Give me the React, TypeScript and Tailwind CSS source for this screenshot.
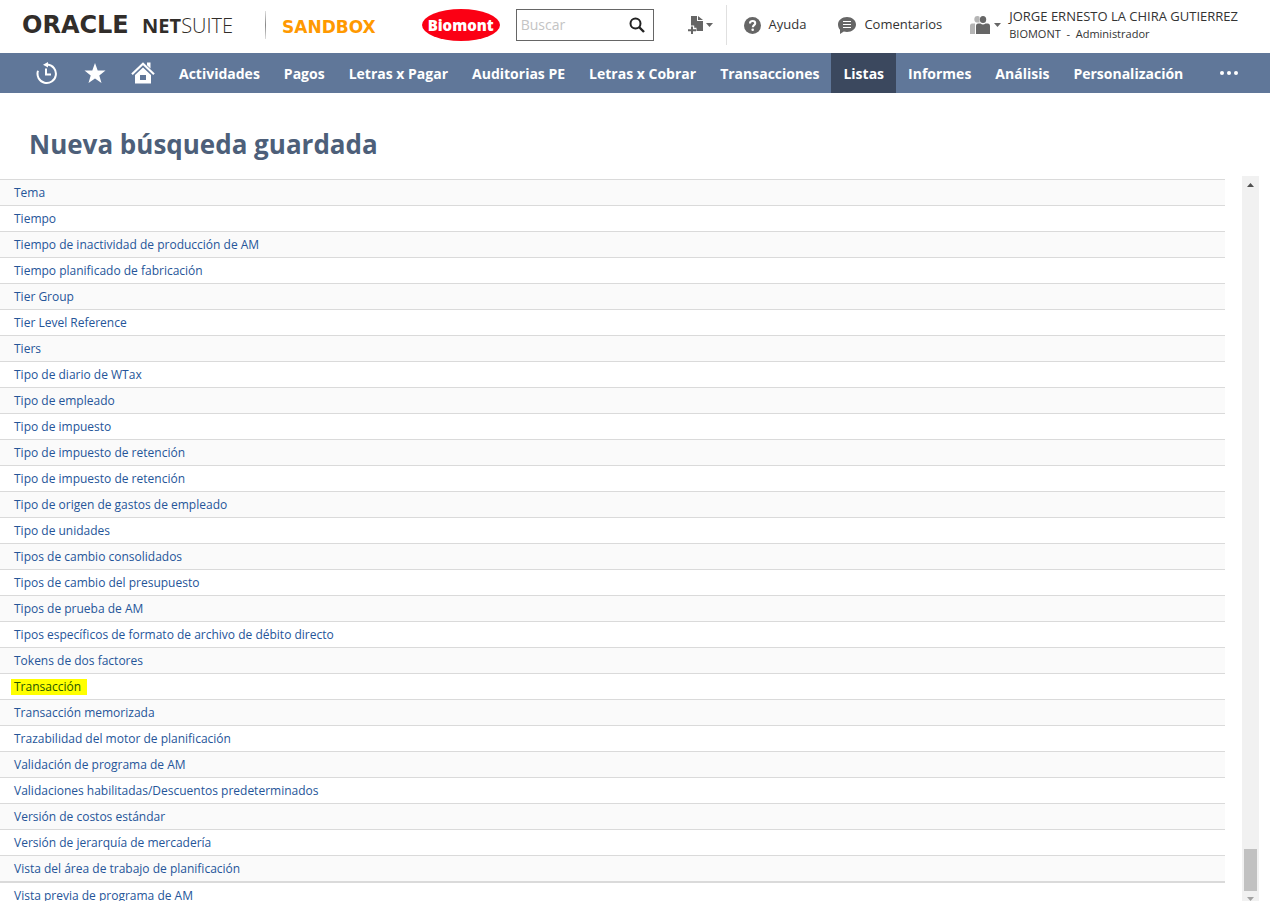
import React from "react";

const menuItems = [
  "Actividades",
  "Pagos",
  "Letras x Pagar",
  "Auditorias PE",
  "Letras x Cobrar",
  "Transacciones",
  "Listas",
  "Informes",
  "Análisis",
  "Personalización",
];

const searchTypes = [
  "Tema",
  "Tiempo",
  "Tiempo de inactividad de producción de AM",
  "Tiempo planificado de fabricación",
  "Tier Group",
  "Tier Level Reference",
  "Tiers",
  "Tipo de diario de WTax",
  "Tipo de empleado",
  "Tipo de impuesto",
  "Tipo de impuesto de retención",
  "Tipo de impuesto de retención",
  "Tipo de origen de gastos de empleado",
  "Tipo de unidades",
  "Tipos de cambio consolidados",
  "Tipos de cambio del presupuesto",
  "Tipos de prueba de AM",
  "Tipos específicos de formato de archivo de débito directo",
  "Tokens de dos factores",
  "Transacción",
  "Transacción memorizada",
  "Trazabilidad del motor de planificación",
  "Validación de programa de AM",
  "Validaciones habilitadas/Descuentos predeterminados",
  "Versión de costos estándar",
  "Versión de jerarquía de mercadería",
  "Vista del área de trabajo de planificación",
  "Vista previa de programa de AM",
];

function Caret() {
  return (
    <svg width="7" height="4" viewBox="0 0 7 4" fill="#666" aria-hidden="true">
      <path d="M0 0h7L3.5 4z" />
    </svg>
  );
}

function HistoryIcon() {
  return (
    <svg width="22" height="22" viewBox="0 0 22 22" fill="none" stroke="#fff" aria-hidden="true">
      <path d="M2 8.800a9.200 9.200 0 1 0 9.500-6.200" strokeWidth="2" />
      <path d="M7 2.800 12 0v5.600z" fill="#fff" stroke="none" />
      <path d="M10 6.500v6H15" strokeWidth="2" />
    </svg>
  );
}

function StarIcon() {
  return (
    <svg width="22" height="20" viewBox="0 0 22 20" fill="#fff" aria-hidden="true">
      <path d="M11 0l2.700 7.400 7.800.2-6.200 4.800 2.200 7.500L11 15.500l-6.500 4.400 2.200-7.500L.500 7.600l7.800-.2z" />
    </svg>
  );
}

function HomeIcon() {
  return (
    <svg width="24" height="22" viewBox="0 0 24 22" aria-hidden="true">
      <path d="M1 12.200 12 1.800l11 10.400" fill="none" stroke="#fff" strokeWidth="2.200" />
      <path d="M16 .5h3.500v6L16 3.300z" fill="#fff" />
      <path fillRule="evenodd" d="M12 5.500l8 7.500v8.500H4V13zM9 13v5h6v-5z" fill="#fff" />
    </svg>
  );
}

function NewRecordIcon() {
  return (
    <svg width="16" height="18" viewBox="0 0 16 18" fill="#666" aria-hidden="true">
      <path d="M3 0h6v5h6v10H8.500v-3.200H6.200V9.500H3z" />
      <path d="M10 0l5 4h-5z" />
      <path d="M3 10.500h2v2.700h3v2H5V18H3v-2.800H0v-2h3z" />
    </svg>
  );
}

function HelpIcon() {
  return (
    <svg width="17" height="17" viewBox="0 0 17 17" aria-hidden="true">
      <circle cx="8.500" cy="8.500" r="8.500" fill="#666" />
      <path d="M6 6.400C6 4.800 7.100 4 8.600 4s2.600.8 2.600 2.200c0 1.900-2.400 1.900-2.400 4" fill="none" stroke="#fff" strokeWidth="2.100" />
      <circle cx="8.700" cy="12.800" r="1.300" fill="#fff" />
    </svg>
  );
}

function CommentIcon() {
  return (
    <svg width="18" height="17" viewBox="0 0 18 17" aria-hidden="true">
      <path d="M9 0c5 0 9 3.200 9 7.500S14 15 9 15c-1.200 0-2.300-.1-3.200-.4L2 17v-4.200C.8 11.400 0 9.600 0 7.500 0 3.200 4 0 9 0z" fill="#666" />
      <path d="M5 4.500h8M5 7.500h8M5 10.500h8" stroke="#fff" strokeWidth="1.200" />
    </svg>
  );
}

function PeopleIcon() {
  return (
    <svg width="20" height="18" viewBox="0 0 20 18" aria-hidden="true">
      <path d="M7.500 0a3.300 3.300 0 0 0-3.200 3.300c0 1.600 1 3 2.300 3.300h3V.8A3 3 0 0 0 7.500 0z" fill="#b5b5b5" />
      <path d="M0 18v-8c0-1.500.8-2.300 2-2.500h3V18z" fill="#b5b5b5" />
      <ellipse cx="13" cy="3.500" rx="3.200" ry="3.500" fill="#666" />
      <path d="M6 18v-8c0-1.600.8-2.400 2.200-2.500h2.300c1.500 1.200 3.500 1.200 5 0h2.300c1.400.1 2.200.9 2.200 2.500v8z" fill="#666" />
    </svg>
  );
}

function SearchIcon() {
  return (
    <svg width="16" height="16" viewBox="0 0 16 16" fill="none" stroke="#222" aria-hidden="true">
      <circle cx="6.500" cy="6.500" r="5" strokeWidth="2" />
      <path d="M10 10l5 5" strokeWidth="2.400" />
    </svg>
  );
}

function Header() {
  return (
    <header className="flex h-[53px] shrink-0 items-center bg-white pb-[3px] pl-[22px] pr-8 whitespace-nowrap text-[#333]">
      <a href="#inicio" className="flex w-[243px] items-baseline justify-between pr-8 text-[#312d2a]">
        <span className="font-['DejaVu_Sans',sans-serif] text-2xl leading-6 font-bold">
          ORACLE
        </span>
        <span className="text-xl leading-6">
          <b>NET</b>
          <span className="font-light">SUITE</span>
        </span>
      </a>
      <div className="h-7 w-px bg-gradient-to-b from-[#ddd] via-[#888] to-[#ddd]" />
      <div className="ml-4 pt-1 font-['DejaVu_Sans',sans-serif] text-[17px] leading-5 font-bold text-[#ff9900]">
        SANDBOX
      </div>
      <div className="ml-[46px] flex h-8 w-[78px] items-center justify-center rounded-[50%] bg-[#fb0014] text-[15px] font-extrabold text-white">
        Biomont
      </div>
      <form className="ml-4 flex h-8 w-[138px] items-center border border-[#666] pr-2" role="search">
        <input
          type="text"
          aria-label="Buscar"
          placeholder="Buscar"
          className="min-w-0 flex-1 px-1 text-sm placeholder:text-[#c4c4c4] focus:outline-none"
        />
        <button type="button" aria-label="Iniciar búsqueda">
          <SearchIcon />
        </button>
      </form>
      <div className="ml-auto flex items-center">
        <button type="button" aria-label="Crear nuevo" className="flex items-center gap-[2px]">
          <NewRecordIcon />
          <Caret />
        </button>
        <div className="ml-[13px] h-10 w-px bg-[#e0e0e0]" />
        <a href="#ayuda" className="ml-[17px] flex items-center gap-2 text-[13px]">
          <HelpIcon />
          Ayuda
        </a>
        <a href="#comentarios" className="ml-8 flex items-center gap-2 text-[13px]">
          <CommentIcon />
          Comentarios
        </a>
        <button type="button" className="ml-7 flex items-center text-left">
          <PeopleIcon />
          <span className="ml-1 mr-2">
            <Caret />
          </span>
          <span>
            <span className="block text-[13px] leading-[18px]">JORGE ERNESTO LA CHIRA GUTIERREZ</span>
            <span className="block text-[11px] leading-[18px]">BIOMONT&nbsp; -&nbsp; Administrador</span>
          </span>
        </button>
      </div>
    </header>
  );
}

function NavBar() {
  return (
    <nav className="flex h-10 shrink-0 items-stretch bg-[#607799] pr-8 pl-[23px] text-sm font-bold whitespace-nowrap text-white">
      <a href="#recientes" aria-label="Registros recientes" className="flex w-12 items-center justify-center">
        <HistoryIcon />
      </a>
      <a href="#accesos" aria-label="Accesos directos" className="flex w-12 items-center justify-center">
        <StarIcon />
      </a>
      <a href="#inicio" aria-label="Inicio" className="flex w-12 items-center justify-center">
        <HomeIcon />
      </a>
      {menuItems.map((item) => (
        <a
          key={item}
          href="#menu"
          className={
            item === "Listas"
              ? "flex items-center bg-[#3b485e] px-3 pt-[2px]"
              : "flex items-center px-3 pt-[2px]"
          }
        >
          {item}
        </a>
      ))}
      <button type="button" aria-label="Más" className="ml-auto">
        <svg width="18" height="4" viewBox="0 0 18 4" fill="#fff" aria-hidden="true">
          <circle cx="2" cy="2" r="2" />
          <circle cx="9" cy="2" r="2" />
          <circle cx="16" cy="2" r="2" />
        </svg>
      </button>
    </nav>
  );
}

function SearchTypeList() {
  return (
    <ul className="mt-[3px] min-w-0 flex-1">
      {searchTypes.map((label, i) => (
        <li
          key={i}
          className="border-t border-[#dadada] pl-[11px] text-xs leading-[25px] last:border-t-2 odd:bg-[#fafafa]"
        >
          <a href="#tipo" className="flex h-[25px] items-center text-[#255599]">
            {label === "Transacción" ? (
              <mark className="bg-[#ffff00] pr-[6px] pl-[3px] leading-4 text-[#255500]">{label}</mark>
            ) : (
              <span className="px-[3px]">{label}</span>
            )}
          </a>
        </li>
      ))}
    </ul>
  );
}

function ScrollTrack() {
  return (
    <div className="flex w-[17px] flex-col items-center bg-[#f1f1f1] pt-[7px]" aria-hidden="true">
      <svg width="7" height="4" viewBox="0 0 7 4" fill="#505050">
        <path d="M0 4h7L3.500 0z" />
      </svg>
      <div className="mt-auto h-[42px] w-[13px] bg-[#c1c1c1]" />
      <svg className="mt-[6px]" width="7" height="4" viewBox="0 0 7 4" fill="#a3a3a3">
        <path d="M0 0h7L3.500 4z" />
      </svg>
    </div>
  );
}

export default function App() {
  return (
    <div className="flex h-screen flex-col overflow-hidden bg-white font-['Open_Sans',sans-serif]">
      <Header />
      <NavBar />
      <main className="flex min-h-0 flex-1 flex-col">
        <h1 className="px-[29px] pt-[31px] pb-3 text-[26px] leading-10 font-bold text-[#4d5f79]">
          Nueva búsqueda guardada
        </h1>
        <div className="flex min-h-0 flex-1 gap-[17px] overflow-hidden pr-[11px]">
          <SearchTypeList />
          <ScrollTrack />
        </div>
      </main>
    </div>
  );
}
